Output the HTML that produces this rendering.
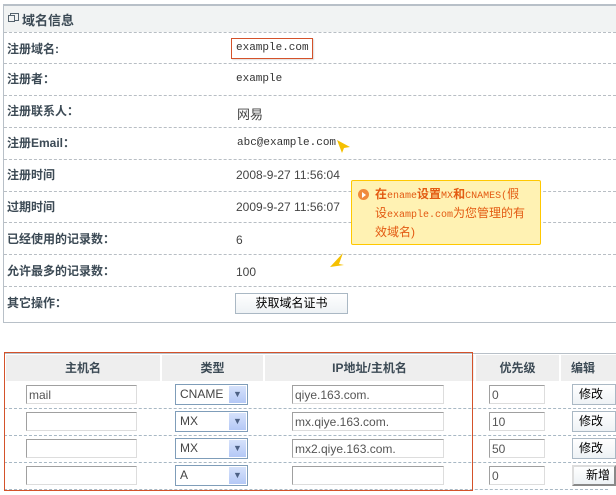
<!DOCTYPE html>
<html><head><meta charset="utf-8"><style>
body{margin:0;width:616px;height:495px;background:#fff;position:relative;overflow:hidden;font-family:"Liberation Sans","Noto Sans CJK SC",sans-serif;font-size:12px;color:#333}
.a{position:absolute}
.lbl{position:absolute;left:7px;font-weight:bold;color:#3c4a55;font-size:12px}
.val{position:absolute;left:236px;font-size:11px;font-family:"Liberation Mono","Noto Sans CJK SC",monospace;color:#333}
.val2{position:absolute;left:236px;font-size:12px;color:#444}
.dl{position:absolute;left:4px;width:612px;border-top:1px dashed #b8bec4}
.inp{position:absolute;border:1px solid #a0a0a0;border-right-color:#ddd;border-bottom-color:#ddd;height:19px;background:#fff;font-size:12px;color:#555;line-height:18px;padding-left:2px;box-sizing:border-box}
.sel{position:absolute;border:1px solid #7f9db9;height:21px;width:73px;background:#fff;font-size:12px;color:#444;line-height:19px;padding-left:4px;box-sizing:border-box}
.sel i{position:absolute;right:1px;top:1px;width:17px;height:17px;background:linear-gradient(#d6e2fb,#b4c8f6);font-style:normal;color:#4d6185;font-size:9px;text-align:center;line-height:17px}
.btn{position:absolute;border:1px solid #aab8c4;background:linear-gradient(#fff,#eef2f5);font-size:12px;color:#000;text-align:center;box-sizing:border-box}
.th{position:absolute;top:355px;height:26px;line-height:26px;text-align:center;font-weight:bold;color:#3c4a55;background:#eee;font-size:12px}
.m{font-family:"Liberation Mono",monospace;font-size:10px}
</style></head><body>
<div class="a" style="left:3px;top:4px;width:613px;height:316px;border-left:1px solid #b8c0c8;border-top:2px solid #b8c0c8;border-bottom:1px solid #b8c0c8"></div>
<div class="a" style="left:4px;top:6px;width:612px;height:26px;background:#f1f3f3"></div>
<div class="a" style="left:10px;top:13px;width:7px;height:6px;border:1px solid #55636e"></div>
<div class="a" style="left:8px;top:15px;width:5px;height:5px;border:1px solid #55636e;background:#f1f3f3"></div>
<div class="lbl" style="top:10px;left:22px;font-size:13px">域名信息</div>
<div class="dl" style="top:32px"></div><div class="dl" style="top:63px"></div><div class="dl" style="top:95px"></div><div class="dl" style="top:127px"></div><div class="dl" style="top:159px"></div><div class="dl" style="top:191px"></div><div class="dl" style="top:222px"></div><div class="dl" style="top:254px"></div><div class="dl" style="top:286px"></div>
<div class="lbl" style="top:40px">注册域名:</div>
<div class="a" style="left:231px;top:38px;width:80px;height:19px;border:1px solid #d4522a;box-shadow:1px 1px 1px #ddd"></div>
<div class="val" style="top:42px">example.com</div>
<div class="lbl" style="top:70px">注册者：</div><div class="val" style="top:73px">example</div>
<div class="lbl" style="top:102px">注册联系人：</div><div class="val2" style="top:104px;left:237px;font-size:13px">网易</div>
<div class="lbl" style="top:134px">注册Email：</div><div class="val" style="top:137px;left:237px">abc@example.com</div>
<div class="lbl" style="top:166px">注册时间</div><div class="val2" style="top:168px">2008-9-27 11:56:04</div>
<div class="lbl" style="top:198px">过期时间</div><div class="val2" style="top:200px">2009-9-27 11:56:07</div>
<div class="lbl" style="top:230px">已经使用的记录数：</div><div class="val2" style="top:233px">6</div>
<div class="lbl" style="top:262px">允许最多的记录数：</div><div class="val2" style="top:265px">100</div>
<div class="lbl" style="top:294px">其它操作：</div>
<div class="btn" style="left:235px;top:293px;width:113px;height:21px;line-height:19px">获取域名证书</div>
<svg class="a" style="left:336px;top:139px" width="16" height="16"><path d="M1 1L14 8L8 9L6 14Z" fill="#f5c000"/></svg>
<svg class="a" style="left:329px;top:252px" width="16" height="16"><path d="M14 1L10 12L15 13L1 15Z" fill="#f5c000"/></svg>
<div class="a" style="left:351px;top:180px;width:188px;height:63px;background:#fff2b3;border:1px solid #ffc800;border-radius:2px"></div>
<div class="a" style="left:358px;top:189px;width:11px;height:11px;border-radius:50%;background:#f08a3c"></div>
<div class="a" style="left:362px;top:192px;width:0;height:0;border-left:4px solid #fff;border-top:3px solid transparent;border-bottom:3px solid transparent"></div>
<div class="a" style="left:375px;top:186px;width:165px;line-height:17px;color:#e35a12;font-size:12px;white-space:nowrap"><b>在</b><span class="m">ename</span><b>设置</b><span class="m">MX</span><b>和</b><span class="m">CNAMES(</span>假<br>设<span class="m">example.com</span>为您管理的有<br>效域名)</div>

<div class="a" style="left:4px;top:353px;width:612px;border-top:1px solid #b8c0c8"></div>
<div class="th" style="left:6px;width:154px">主机名</div>
<div class="th" style="left:162px;width:101px">类型</div>
<div class="th" style="left:265px;width:209px">IP地址/主机名</div>
<div class="th" style="left:476px;width:83px">优先级</div>
<div class="th" style="left:561px;width:55px;text-align:left;padding-left:10px;box-sizing:border-box">编辑</div>
<div class="dl" style="top:408px;border-color:#a8b8c4"></div><div class="dl" style="top:435px;border-color:#a8b8c4"></div><div class="dl" style="top:462px;border-color:#a8b8c4"></div><div class="dl" style="top:489px;border-color:#a8b8c4;width:604px"></div>

<div class="inp" style="left:26px;top:385px;width:111px">mail</div>
<div class="sel" style="left:175px;top:384px">CNAME<i>&#9660;</i></div>
<div class="inp" style="left:292px;top:385px;width:152px">qiye.163.com.</div>
<div class="inp" style="left:489px;top:385px;width:56px">0</div>
<div class="btn" style="left:572px;top:384px;width:44px;height:21px;line-height:19px;text-align:left;padding-left:6px">修改</div>

<div class="inp" style="left:26px;top:412px;width:111px"></div>
<div class="sel" style="left:175px;top:411px">MX<i>&#9660;</i></div>
<div class="inp" style="left:292px;top:412px;width:152px">mx.qiye.163.com.</div>
<div class="inp" style="left:489px;top:412px;width:56px">10</div>
<div class="btn" style="left:572px;top:411px;width:44px;height:21px;line-height:19px;text-align:left;padding-left:6px">修改</div>

<div class="inp" style="left:26px;top:439px;width:111px"></div>
<div class="sel" style="left:175px;top:438px">MX<i>&#9660;</i></div>
<div class="inp" style="left:292px;top:439px;width:152px">mx2.qiye.163.com.</div>
<div class="inp" style="left:489px;top:439px;width:56px">50</div>
<div class="btn" style="left:572px;top:438px;width:44px;height:21px;line-height:19px;text-align:left;padding-left:6px">修改</div>

<div class="inp" style="left:26px;top:466px;width:111px"></div>
<div class="sel" style="left:175px;top:465px">A<i>&#9660;</i></div>
<div class="inp" style="left:292px;top:466px;width:152px"></div>
<div class="inp" style="left:489px;top:466px;width:56px">0</div>
<div class="btn" style="left:572px;top:465px;width:44px;height:21px;line-height:17px;text-align:left;padding-left:12px;border:2px outset #ddd">新增</div>

<div class="a" style="left:4px;top:352px;width:467px;height:137px;border:1px solid #d4522a"></div>
</body></html>
